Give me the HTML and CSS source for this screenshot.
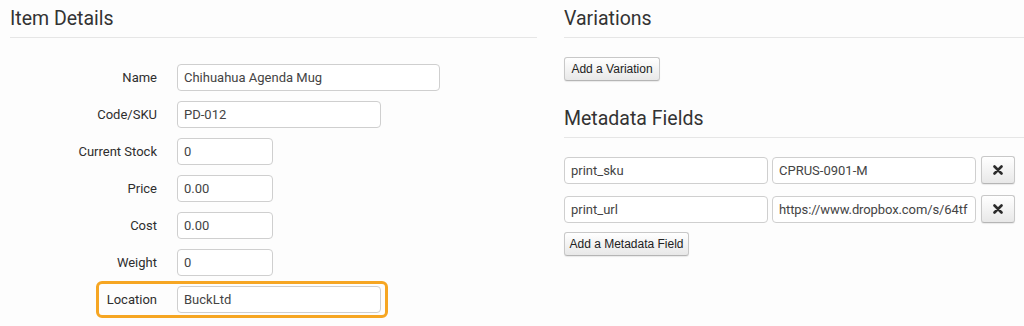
FILE: index.html
```html
<!DOCTYPE html>
<html>
<head>
<meta charset="utf-8">
<link rel="stylesheet" href="styles.css">
</head>
<body>
<div class="page">
  <section class="col col-left">
    <h2 class="heading">Item Details</h2>
    <div class="form">
      <div class="row"><label class="lbl">Name</label><input class="inp w-lg" value="Chihuahua Agenda Mug"></div>
      <div class="row"><label class="lbl">Code/SKU</label><input class="inp w-md" value="PD-012"></div>
      <div class="row"><label class="lbl">Current Stock</label><input class="inp w-sm" value="0"></div>
      <div class="row"><label class="lbl">Price</label><input class="inp w-sm" value="0.00"></div>
      <div class="row"><label class="lbl">Cost</label><input class="inp w-sm" value="0.00"></div>
      <div class="row"><label class="lbl">Weight</label><input class="inp w-sm" value="0"></div>
      <div class="row row-hl"><label class="lbl">Location</label><input class="inp w-md" value="BuckLtd"></div>
    </div>
  </section>
  <section class="col col-right">
    <h2 class="heading">Variations</h2>
    <button class="btn btn-var">Add a Variation</button>
    <h2 class="heading heading-meta">Metadata Fields</h2>
    <div class="meta">
      <div class="meta-row">
        <input class="inp w-md" value="print_sku">
        <input class="inp w-md" value="CPRUS-0901-M">
        <button class="btn btn-x" aria-label="Remove"><svg width="10" height="10" viewBox="0 0 10 10"><path d="M1.5 1.5 L8.5 8.5 M8.5 1.5 L1.5 8.5" stroke="#2b2b2b" stroke-width="2.6" stroke-linecap="round"/></svg></button>
      </div>
      <div class="meta-row">
        <input class="inp w-md" value="print_url">
        <input class="inp w-md inp-url" value="https://www.dropbox.com/s/64tf">
        <button class="btn btn-x" aria-label="Remove"><svg width="10" height="10" viewBox="0 0 10 10"><path d="M1.5 1.5 L8.5 8.5 M8.5 1.5 L1.5 8.5" stroke="#2b2b2b" stroke-width="2.6" stroke-linecap="round"/></svg></button>
      </div>
      <button class="btn btn-meta">Add a Metadata Field</button>
    </div>
  </section>
</div>
</body>
</html>
```
FILE: styles.css
```css
html, body {
  margin: 0;
  padding: 0;
  background: #fdfdfd;
}
body {
  font-family: Roboto, "Noto Sans", sans-serif;
  color: #333;
  width: 1024px;
  height: 326px;
  overflow: hidden;
}
.page {
  display: flex;
  padding-left: 10px;
  gap: 27px;
}
.col-left {
  width: 527px;
  flex: none;
}
.col-right {
  flex: 1;
}
.heading {
  margin: 0;
  padding-top: 7px;
  padding-bottom: 6px;
  font-size: 19.5px;
  line-height: 24px;
  font-weight: 400;
  color: #333;
  border-bottom: 1px solid #e6e6e6;
}
.form {
  display: flex;
  flex-direction: column;
  gap: 10px;
  padding-top: 26px;
}
.row {
  display: flex;
  align-items: center;
  gap: 20px;
  position: relative;
}
.lbl {
  width: 147px;
  text-align: right;
  font-size: 13px;
  color: #2e2e2e;
}
.inp {
  box-sizing: border-box;
  height: 27px;
  border: 1px solid #cfcfcf;
  border-radius: 4px;
  background: #fff;
  padding: 0 6px;
  font-family: Roboto, "Noto Sans", sans-serif;
  font-size: 13px;
  color: #444;
  outline: none;
}
.inp-url {
  padding: 0 4px 0 6px;
  letter-spacing: -0.1px;
}
.w-lg { width: 263px; }
.w-md { width: 204px; }
.w-sm { width: 96px; }
.row-hl::after {
  content: "";
  position: absolute;
  left: 86px;
  top: -5px;
  width: 292px;
  height: 37px;
  box-sizing: border-box;
  border: 3px solid #f6a623;
  border-radius: 6px;
  pointer-events: none;
}
.btn {
  box-sizing: border-box;
  font-family: "Liberation Sans", Arial, sans-serif;
  font-size: 12px;
  color: #222;
  white-space: nowrap;
  background: linear-gradient(#ffffff, #e8e8e8);
  border: 1px solid #c8c8c8;
  border-bottom-color: #b5b5b5;
  border-radius: 3px;
  box-shadow: 0 1px 1px rgba(0,0,0,0.08);
  padding: 0 4px;
  height: 24px;
  display: flex;
  align-items: center;
  justify-content: center;
}
.btn-var {
  margin-top: 19px;
  width: 96px;
}
.heading-meta {
  margin-top: 19px;
}
.meta {
  display: flex;
  flex-direction: column;
  gap: 11px;
  padding-top: 18px;
  align-items: flex-start;
}
.meta-row {
  display: flex;
  gap: 4px;
  align-items: center;
}
.btn-x {
  width: 34px;
  height: 28px;
  padding: 0;
  margin-left: 1px;
}
.btn-meta {
  margin-top: -2px;
  width: 125px;
}
```
